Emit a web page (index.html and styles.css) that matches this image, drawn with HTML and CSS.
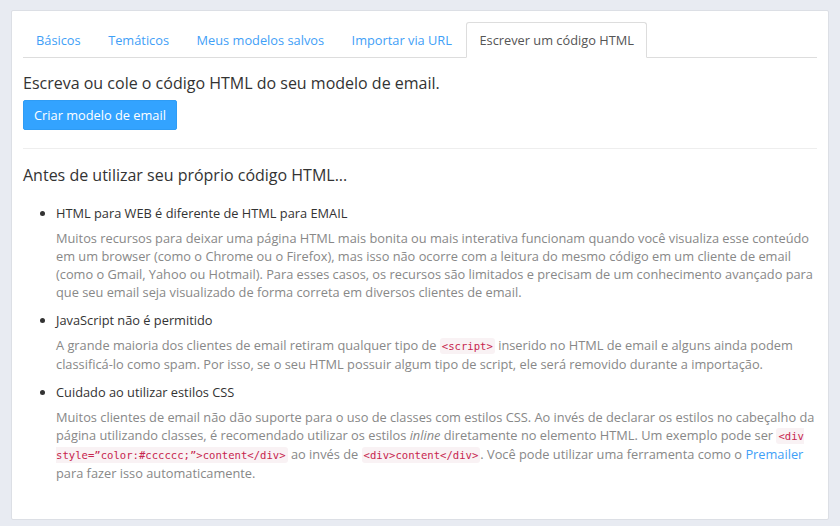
FILE: index.html
```html
<!DOCTYPE html>
<html lang="pt-BR">
<head>
<meta charset="utf-8">
<title>Escrever um código HTML</title>
<link rel="stylesheet" href="styles.css">
</head>
<body>
<div class="panel">
  <ul class="tabs">
    <li class="tab"><a href="#">Básicos</a></li>
    <li class="tab"><a href="#">Temáticos</a></li>
    <li class="tab"><a href="#">Meus modelos salvos</a></li>
    <li class="tab"><a href="#">Importar via URL</a></li>
    <li class="tab active"><a href="#">Escrever um código HTML</a></li>
  </ul>
  <p class="lead">Escreva ou cole o código HTML do seu modelo de email.</p>
  <button class="btn">Criar modelo de email</button>
  <hr class="sep">
  <h2 class="title">Antes de utilizar seu próprio código HTML...</h2>
  <ul class="tips">
    <li>
      <div class="tip-title">HTML para WEB é diferente de HTML para EMAIL</div>
      <p class="tip-text">Muitos recursos para deixar uma página HTML mais bonita ou mais interativa funcionam quando você visualiza esse conteúdo em um browser (como o Chrome ou o Firefox), mas isso não ocorre com a leitura do mesmo código em um cliente de email (como o Gmail, Yahoo ou Hotmail). Para esses casos, os recursos são limitados e precisam de um conhecimento avançado para que seu email seja visualizado de forma correta em diversos clientes de email.</p>
    </li>
    <li>
      <div class="tip-title">JavaScript não é permitido</div>
      <p class="tip-text">A grande maioria dos clientes de email retiram qualquer tipo de <code>&lt;script&gt;</code> inserido no HTML de email e alguns ainda podem classificá-lo como spam. Por isso, se o seu HTML possuir algum tipo de script, ele será removido durante a importação.</p>
    </li>
    <li>
      <div class="tip-title">Cuidado ao utilizar estilos CSS</div>
      <p class="tip-text">Muitos clientes de email não dão suporte para o uso de classes com estilos CSS. Ao invés de declarar os estilos no cabeçalho da página utilizando classes, é recomendado utilizar os estilos <em>inline</em> diretamente no elemento HTML. Um exemplo pode ser <code>&lt;div style=”color:#cccccc;”&gt;content&lt;/div&gt;</code> ao invés de <code>&lt;div&gt;content&lt;/div&gt;</code>. Você pode utilizar uma ferramenta como o <a href="#" class="link">Premailer</a> para fazer isso automaticamente.</p>
    </li>
  </ul>
</div>
</body>
</html>
```
FILE: styles.css
```css
* { box-sizing: border-box; }
html, body { margin: 0; padding: 0; }
body {
  background: #e8ebf2;
  font-family: "Open Sans", "Noto Sans", sans-serif;
  font-size: 12.8px;
  color: #333;
  padding: 10px 11px 10px 11px;
}
.panel {
  background: #fff;
  border: 1px solid #dcdfe5;
  border-radius: 2px;
  padding: 11px 11px 27px 11px;
  min-height: 506px;
}
.tabs {
  list-style: none;
  margin: 0;
  padding: 0;
  display: flex;
  border-bottom: 1px solid #ddd;
}
.tab { margin-right: 1.5px; margin-bottom: -1px; }
.tab a {
  display: block;
  padding: 8px 12px;
  line-height: 18px;
  color: #3fa0f7;
  text-decoration: none;
  border: 1px solid transparent;
  border-radius: 3px 3px 0 0;
}
.tab.active a {
  color: #555;
  background: #fff;
  border-color: #ddd #ddd transparent #ddd;
}
.lead {
  font-size: 16px;
  line-height: 22px;
  margin: 14px 0 6px;
  color: #333;
}
.btn {
  display: block;
  font-family: inherit;
  font-size: 12.8px;
  line-height: 18px;
  padding: 5px 10px;
  background: #33a3ff;
  color: #fff;
  border: 1px solid #2f9cf5;
  border-radius: 2px;
}
.sep {
  border: 0;
  border-top: 1px solid #eee;
  margin: 18px 0 15px;
}
.title {
  font-size: 16px;
  font-weight: normal;
  line-height: 22px;
  margin: 0 0 18px;
  color: #333;
}
.tips {
  margin: 0;
  padding-left: 33px;
  list-style: disc;
}
.tips li { line-height: 18px; }
.tip-title { color: #333; margin-bottom: 7px; }
.tip-text {
  margin: 0 0 10px;
  color: #888;
  line-height: 18px;
}
code {
  font-family: "DejaVu Sans Mono", "Liberation Mono", monospace;
  font-size: 10.6px;
  color: #c7254e;
  background: #f9f2f4;
  padding: 2px 2px;
  border-radius: 3px;
}
.link { color: #3fa0f7; text-decoration: none; }
```
